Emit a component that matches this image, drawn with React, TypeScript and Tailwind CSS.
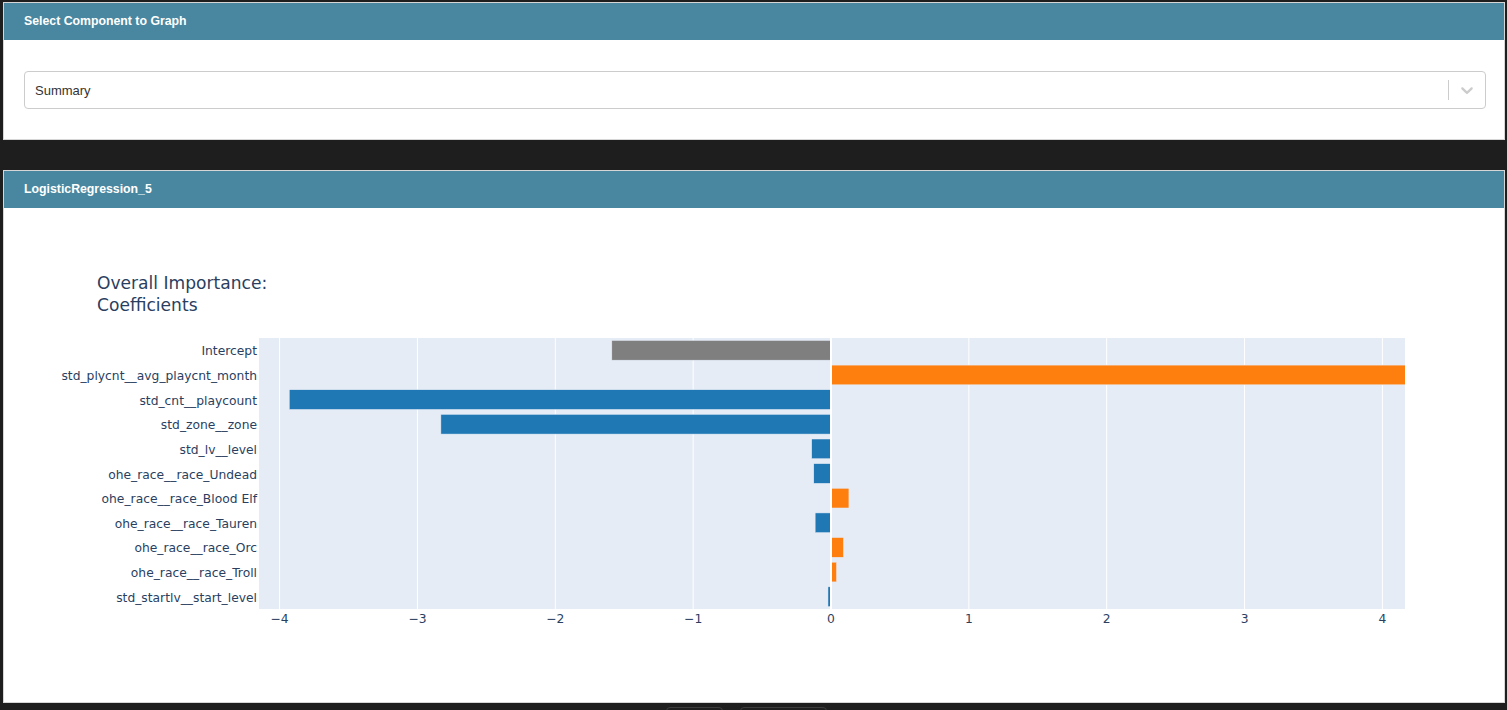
import React from "react";

const features = [
  { name: "Intercept", value: -1.59, color: "#7f7f7f" },
  { name: "std_plycnt__avg_playcnt_month", value: 4.6, color: "#ff7f0e" },
  { name: "std_cnt__playcount", value: -3.93, color: "#1f77b4" },
  { name: "std_zone__zone", value: -2.83, color: "#1f77b4" },
  { name: "std_lv__level", value: -0.14, color: "#1f77b4" },
  { name: "ohe_race__race_Undead", value: -0.125, color: "#1f77b4" },
  { name: "ohe_race__race_Blood Elf", value: 0.13, color: "#ff7f0e" },
  { name: "ohe_race__race_Tauren", value: -0.115, color: "#1f77b4" },
  { name: "ohe_race__race_Orc", value: 0.09, color: "#ff7f0e" },
  { name: "ohe_race__race_Troll", value: 0.04, color: "#ff7f0e" },
  { name: "std_startlv__start_level", value: -0.022, color: "#1f77b4" },
];

const ticks = [-4, -3, -2, -1, 0, 1, 2, 3, 4];

// plot area, in page coordinates
const PL = 259;
const PR = 1405;
const PT = 338;
const PB = 609;
const ZERO = 831;
const UNIT = 137.85;
const ROW = (PB - PT) / features.length;

const xOf = (v: number) => ZERO + v * UNIT;

function CoefChart() {
  return (
    <svg width={1500} height={494} className="block">
      <defs>
        <clipPath id="plotclip">
          <rect x={PL} y={PT} width={PR - PL} height={PB - PT} />
        </clipPath>
      </defs>
      <g transform="translate(-4,-208)" fontFamily="'DejaVu Sans', verdana, arial, sans-serif">
        <text x={97} y={289} fontSize={17.1} fill="#2a3f5f">
          Overall Importance:
        </text>
        <text x={97} y={311} fontSize={17.1} fill="#2a3f5f">
          Coefficients
        </text>

        <rect x={PL} y={PT} width={PR - PL} height={PB - PT} fill="#e5ecf6" />
        {ticks
          .filter((t) => t !== 0)
          .map((t) => (
            <line key={t} x1={xOf(t)} x2={xOf(t)} y1={PT} y2={PB} stroke="#ffffff" strokeWidth={1} />
          ))}

        <g clipPath="url(#plotclip)">
          {features.map((f, i) => {
            const cy = PT + ROW * (i + 0.5);
            const h = ROW * 0.8;
            const x0 = Math.min(xOf(0), xOf(f.value));
            const w = Math.abs(xOf(f.value) - xOf(0));
            return (
              <rect
                key={f.name}
                x={x0}
                y={cy - h / 2}
                width={w}
                height={h}
                fill={f.color}
                stroke="#e5ecf6"
                strokeWidth={0.5}
              />
            );
          })}
        </g>
        <line x1={ZERO} x2={ZERO} y1={PT} y2={PB} stroke="#ffffff" strokeWidth={2} />

        {features.map((f, i) => (
          <text
            key={f.name}
            x={257}
            y={PT + ROW * (i + 0.5) + 5}
            fontSize={12.3}
            fill="#2a3f5f"
            textAnchor="end"
          >
            {f.name}
          </text>
        ))}
        {ticks.map((t) => (
          <text key={t} x={xOf(t)} y={623} fontSize={12.3} fill="#2a3f5f" textAnchor="middle">
            {t < 0 ? `\u2212${Math.abs(t)}` : t}
          </text>
        ))}
      </g>
    </svg>
  );
}

export default function App() {
  return (
    <div className="min-h-screen bg-[#1e1e1e] pl-[3px] pr-[2px] pt-[2px] font-['Liberation_Sans',Arial,sans-serif] overflow-hidden">
      {/* Component selector card */}
      <div className="border border-[#d6d6d6] bg-white">
        <div className="flex h-[37px] items-center bg-[#4987a0] px-5 text-[12.3px] font-bold text-white">
          Select Component to Graph
        </div>
        <div className="pb-[30px] pl-5 pr-[18px] pt-[31px]">
          <div className="flex h-[38px] items-center rounded border border-[#cccccc] bg-white pl-[10px] text-[13px] text-[#333333]">
            <span className="flex-1 pt-px">Summary</span>
            <div className="h-5 w-px bg-[#cccccc]" />
            <div className="flex w-[36px] items-center justify-center">
              <svg width="20" height="20" viewBox="0 0 20 20" fill="#cccccc">
                <path d="M4.516 7.548c0.436-0.446 1.043-0.481 1.576 0l3.908 3.747 3.908-3.747c0.533-0.481 1.141-0.446 1.574 0 0.436 0.445 0.408 1.197 0 1.615-0.406 0.418-4.695 4.502-4.695 4.502-0.217 0.223-0.502 0.335-0.787 0.335s-0.57-0.112-0.789-0.335c0 0-4.287-4.084-4.695-4.502s-0.436-1.17 0-1.615z" />
              </svg>
            </div>
          </div>
        </div>
      </div>

      {/* Model card */}
      <div className="mt-[30px] border border-[#d6d6d6] bg-white">
        <div className="flex h-[37px] items-center bg-[#4987a0] px-5 text-[12.3px] font-bold text-white">
          LogisticRegression_5
        </div>
        <CoefChart />
      </div>

      <div className="flex justify-center gap-[17px] pr-[15px] pt-[4px]">
        <div className="h-[20px] w-[57px] rounded-sm border border-[#3c3c3c]" />
        <div className="h-[20px] w-[87px] rounded-sm border border-[#3c3c3c]" />
      </div>
    </div>
  );
}
